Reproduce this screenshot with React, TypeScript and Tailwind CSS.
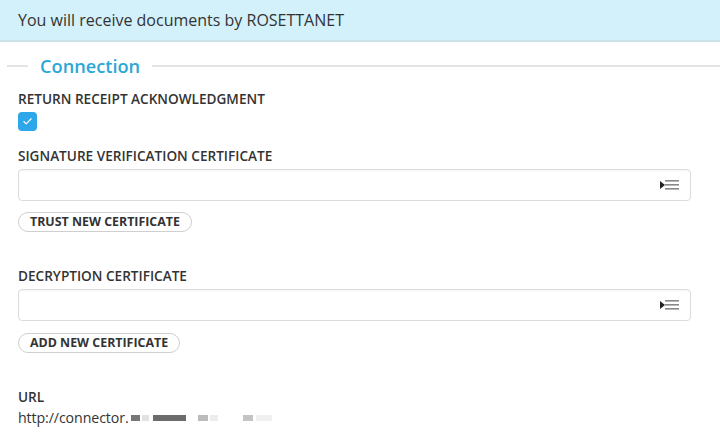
import { Check } from 'lucide-react';

function PickerIcon() {
  return (
    <svg width="20" height="12" viewBox="0 0 20 12" className="shrink-0">
      <path d="M0 2 L5 6 L0 10 Z" fill="#222" />
      <rect x="5" y="1" width="14" height="1.6" fill="#888" />
      <rect x="5" y="5" width="14" height="1.6" fill="#888" />
      <rect x="5" y="9" width="14" height="1.6" fill="#888" />
    </svg>
  );
}

function Label({ children }: { children: React.ReactNode }) {
  return <div className="h-[18px] text-[13.6px] font-semibold text-[#333] leading-[18px]">{children}</div>;
}

function CertInput() {
  return (
    <div className="mt-[4px] h-[32px] w-[673px] rounded-[4px] border border-[#dcdcdc] flex items-center justify-end pr-[10px] shadow-[inset_0_1px_1px_rgba(0,0,0,0.04)]">
      <PickerIcon />
    </div>
  );
}

function PillButton({ children }: { children: React.ReactNode }) {
  return (
    <button className="h-[20px] px-[11px] rounded-full border border-[#cfcfcf] bg-white text-[12.4px] font-bold text-[#333] leading-none">
      {children}
    </button>
  );
}

export default function App() {
  return (
    <div className="w-[720px] h-[448px] bg-white overflow-hidden font-['Open_Sans',sans-serif]">
      <div className="h-[42px] bg-[#d3f1fb] border-b-2 border-[#cde3ea] flex items-center pl-[18px]">
        <span className="text-[16px] text-[#333]">You will receive documents by ROSETTANET</span>
      </div>

      <div className="mt-[12px] h-[24px] flex items-center pl-[7px]">
        <div className="w-[21px] h-[2px] bg-[#e4e4e4]" />
        <span className="px-[12px] text-[18.2px] font-semibold text-[#2ba6d6] leading-6">Connection</span>
        <div className="flex-1 h-[2px] bg-[#e4e4e4]" />
      </div>

      <div className="pl-[18px] mt-[12px]">
        <Label>RETURN RECEIPT ACKNOWLEDGMENT</Label>
        <div className="mt-[4px] w-[19px] h-[19px] rounded-[4px] bg-[#2ea6ea] flex items-center justify-center">
          <Check size={11} strokeWidth={2.5} color="white" />
        </div>

        <div className="mt-[16px]">
          <Label>SIGNATURE VERIFICATION CERTIFICATE</Label>
        </div>
        <CertInput />
        <div className="mt-[11px] flex">
          <PillButton>TRUST NEW CERTIFICATE</PillButton>
        </div>

        <div className="mt-[35px]">
          <Label>DECRYPTION CERTIFICATE</Label>
        </div>
        <CertInput />
        <div className="mt-[12px] flex">
          <PillButton>ADD NEW CERTIFICATE</PillButton>
        </div>

        <div className="mt-[35px]">
          <Label>URL</Label>
        </div>
        <div className="mt-[2px] h-[20px] flex items-center text-[14.2px] text-[#333] tracking-[-0.1px]">
          <span>http://connector.</span>
          <span className="ml-[2px] w-[9px] h-[6px] bg-[#777]" />
          <span className="ml-[2px] w-[7px] h-[6px] bg-[#e2e2e2]" />
          <span className="ml-[4px] w-[33px] h-[6px] bg-[#6c6c6c]" />
          <span className="ml-[12px] w-[10px] h-[6px] bg-[#bbb]" />
          <span className="ml-[2px] w-[8px] h-[6px] bg-[#ececec]" />
          <span className="ml-[25px] w-[10px] h-[6px] bg-[#c4c4c4]" />
          <span className="ml-[3px] w-[16px] h-[6px] bg-[#f0f0f0]" />
        </div>
      </div>
    </div>
  );
}
